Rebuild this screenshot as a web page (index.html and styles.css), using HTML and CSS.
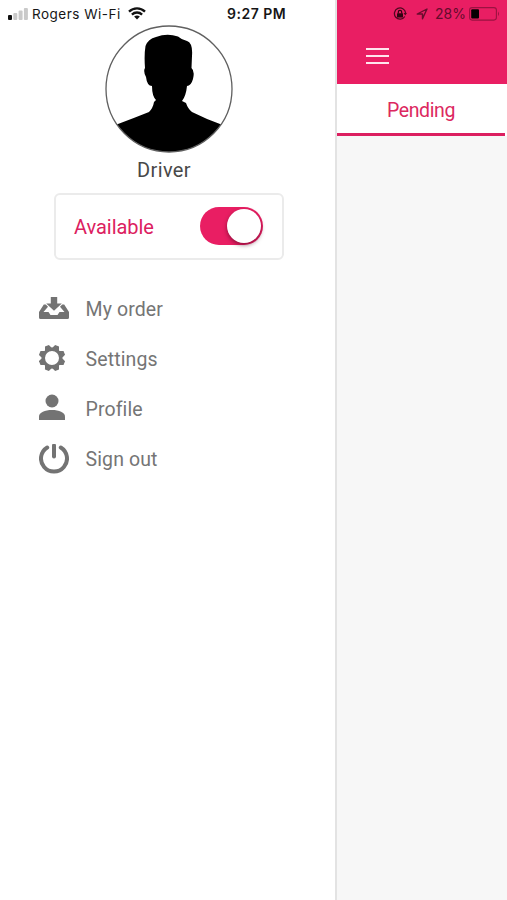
FILE: index.html
```
<!DOCTYPE html>
<html lang="en">
<head>
<meta charset="utf-8">
<title>Driver</title>
<link rel="stylesheet" href="styles.css">
</head>
<body>
<div class="app">
  <aside class="drawer">
    <div class="status">
      <svg class="signal" width="20" height="12" viewBox="0 0 20 12"><rect x="0" y="7" width="4" height="5" rx="1" fill="#111"/><g fill="#c9c9c9"><rect x="5.3" y="5" width="4" height="7" rx="1"/><rect x="10.6" y="2.5" width="4" height="9.5" rx="1"/><rect x="15.9" y="0" width="4" height="12" rx="1"/></g></svg>
      <span class="carrier">Rogers Wi-Fi</span>
      <svg class="wifi" width="18" height="13" viewBox="0 0 18 13"><g fill="none" stroke="#111" stroke-width="2.3"><path d="M1 4.6C5.5.2 12.500.2 17 4.600"/><path d="M3.900 7.600C6.800 4.800 11.200 4.800 14.100 7.600"/></g><path d="M9 12.500L6.100 9.600Q9 7.200 11.900 9.600Z" fill="#111"/></svg>
      <span class="time">9:27 PM</span>
    </div>
    <div class="user">
      <svg class="avatar" width="128" height="128" viewBox="0 0 128 128">
        <defs><clipPath id="disc"><circle cx="64" cy="64" r="63"/></clipPath></defs>
        <path clip-path="url(#disc)" d="M0 104L13 99Q29 93 44 87Q48 83 49 77L51 75Q47 71 47 61Q42 61 41 52Q38 46 40 43Q39 30 40.500 21Q43 14 51 12Q62 8 73 11.500Q77 15 82 16Q88 18 87 31L86.500 43Q90 46 88 54Q86 61 82 61Q81 71 77 76L81 78Q83 84 87 87Q101 94 115 99L128 104V128H0Z"/>
        <circle cx="64" cy="64" r="63" fill="none" stroke="#606060" stroke-width="1.300"/>
      </svg>
      <div class="name">Driver</div>
    </div>
    <div class="availability">
      <span class="availability-label">Available</span>
      <span class="toggle"><span class="knob"></span></span>
    </div>
    <nav class="menu">
      <a class="item"><svg width="30" height="30" viewBox="0 0 30 30"><path d="M11.800 3h6.400v6.500h4.600L15 16.800 7.200 9.500h4.600Z"/><path d="M4.800 10.500H6.800L9 12.800 4.500 18H9.500L11.500 21h7l2-3H25.500L21 12.800 23.200 10.500H25.200L30 18v5.500q0 1.500-1.500 1.500h-27Q0 25 0 23.500V18Z"/></svg><span>My order</span></a>
      <a class="item"><svg width="30" height="30" viewBox="0 0 30 30"><g transform="translate(13 14)"><g id="teeth"><path id="tooth" d="M-4-8.500L-2.100-13.300H2.100L4-8.500Z" transform="rotate(22.500)"/><use href="#tooth" transform="rotate(45)"/><use href="#tooth" transform="rotate(90)"/><use href="#tooth" transform="rotate(135)"/></g><use href="#teeth" transform="rotate(180)"/><circle r="8.700" fill="none" stroke="#737373" stroke-width="3.400"/></g></svg><span>Settings</span></a>
      <a class="item"><svg width="30" height="30" viewBox="0 0 30 30"><circle cx="13" cy="7" r="6.500"/><path d="M0 26v-3.500C0 18.500 6 16 13 16s13 2.500 13 6.500V26Z"/></svg><span>Profile</span></a>
      <a class="item"><svg width="30" height="30" viewBox="0 0 30 30"><g fill="none" stroke="#737373" stroke-width="4" stroke-linecap="round"><path d="M8.200 3.500A13 13 0 1 0 21.800 3.500"/><path d="M15 1.500V12.500"/></g></svg><span>Sign out</span></a>
    </nav>
  </aside>
  <main class="page">
    <header class="topbar">
      <div class="status status-right">
        <svg width="14" height="14" viewBox="0 0 14 14"><path d="M11.800 9.500A5.600 5.600 0 1 1 12.600 6" fill="none" stroke="#500820" stroke-width="1.300"/><path d="M10.500 6h3.500l-1.700 2.600Z" fill="#500820"/><rect x="4" y="6.300" width="6" height="4.200" rx=".5" fill="#300512"/><path d="M5.300 6.500V5a1.700 1.700 0 0 1 3.400 0v1.500" fill="none" stroke="#300512" stroke-width="1.200"/></svg>
        <svg class="arrow" width="12" height="12" viewBox="0 0 12 12"><path d="M1.200 6L11 1 6.500 10.800V6Z" fill="none" stroke="#680c2d" stroke-width="1.400" stroke-linejoin="round"/></svg>
        <span class="percent">28%</span>
        <svg class="battery" width="31" height="14" viewBox="0 0 31 14"><rect x=".6" y=".6" width="26.800" height="12.500" rx="2.500" fill="none" stroke="#9b1241" stroke-width="1.100"/><rect x="2.200" y="2.200" width="7.800" height="9.400" rx="1" fill="#080003"/><path d="M29 4.500q2 2.300 0 4.600Z" fill="#9b1241"/></svg>
      </div>
      <div class="burger"><i></i><i></i><i></i></div>
    </header>
    <div class="tab">Pending</div>
  </main>
</div>
</body>
</html>
```
FILE: styles.css
```
* { box-sizing: border-box; }
body { margin: 0; background: #fff; font-family: Roboto, sans-serif; }
svg { display: block; flex: none; }
.app { display: flex; width: 507px; height: 900px; overflow: hidden; }
.drawer { width: 337px; flex: none; background: #fff; border-right: 2px solid #e3e3e3; }
.status { display: flex; align-items: center; height: 26px; padding: 2px 0 0 8px; font: 500 13.5px/24px Inter, sans-serif; color: #161616; white-space: nowrap; }
.signal { margin-top: -1px; }
.carrier { width: 90px; margin-left: 4px; font-weight: 400; letter-spacing: 0.5px; }
.wifi { margin-left: 6px; margin-top: -1px; }
.time { margin-left: 81px; font-weight: 600; font-size: 14px; letter-spacing: 0.5px; }
.user { display: flex; flex-direction: column; align-items: center; margin-top: -1px; padding-left: 3px; }
.name { margin-top: 5px; font-size: 20px; line-height: 24px; letter-spacing: 0.35px; color: #484848; margin-left: -10px; }
.availability { display: flex; align-items: center; justify-content: space-between; width: 230px; height: 67px; margin: 11px 0 0 54px; padding: 0 20px 1px 20px; border: 2px solid #ebebeb; border-radius: 6px; }
.availability-label { margin-left: -2px; padding-top: 2px; font-size: 20px; letter-spacing: -0.05px; color: #dc2060; }
.toggle { display: flex; align-items: center; justify-content: flex-end; width: 63px; height: 38px; margin-right: -1px; padding-right: 2px; border-radius: 19px; background: #e91e63; }
.knob { width: 34px; height: 34px; border-radius: 50%; background: #fff; box-shadow: 0 2px 4px rgba(70, 0, 25, 0.55); }
.menu { margin: 24px 0 0 39px; }
.item { display: flex; align-items: center; gap: 16.5px; height: 50px; font-size: 19.5px; letter-spacing: 0.12px; color: #757575; }
.item svg { fill: #737373; }
.item span { padding-top: 1px; }
.page { flex: 1; background: #f7f7f7; }
.topbar { height: 84px; background: #e91e63; }
.status-right { padding-left: 56px; color: #650b2c; }
.arrow { margin-left: 9px; }
.percent { width: 31px; margin-left: 7px; font-size: 14px; font-weight: 400; }
.battery { margin-left: 3px; }
.burger { display: flex; flex-direction: column; gap: 5px; width: 23px; margin: 22px 0 0 29px; }
.burger i { height: 2px; background: #ffe4ed; }
.tab { display: flex; align-items: center; justify-content: center; width: 168px; height: 52px; padding-top: 4px; border-bottom: 3px solid #dc1f60; background: #fff; color: #dc2860; font-size: 19.5px; letter-spacing: -0.4px; box-shadow: 2px 0 #fff; }
```
